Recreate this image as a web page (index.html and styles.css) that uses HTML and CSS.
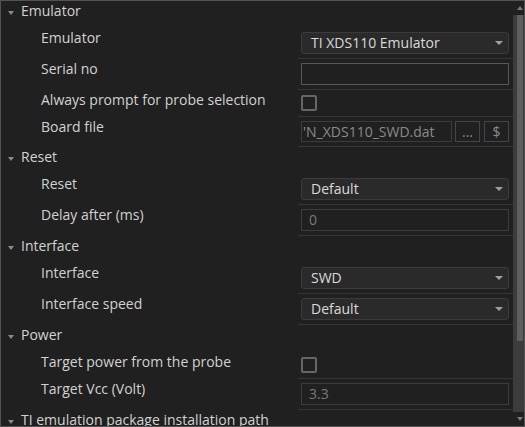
FILE: index.html
```html
<!DOCTYPE html>
<html lang="en">
<head>
    <meta charset="UTF-8">
    <meta name="viewport" content="width=device-width, initial-scale=1.0">
    <title>Debug Properties</title>
    <link rel="stylesheet" href="styles.css">
</head>
<body>

    <div class="panel">
        <div class="grid">
            <!-- Emulator -->
            <div class="section">
                <div class="section-head"><span class="caret"></span>Emulator</div>
                <div class="row">
                    <div class="label">Emulator</div>
                    <div class="value">
                        <div class="select">TI XDS110 Emulator<span class="arrow"></span></div>
                    </div>
                </div>
                <div class="row">
                    <div class="label">Serial no</div>
                    <div class="value"><div class="input"></div></div>
                </div>
                <div class="row">
                    <div class="label">Always prompt for probe selection</div>
                    <div class="value"><span class="checkbox"></span></div>
                </div>
                <div class="row">
                    <div class="label">Board file</div>
                    <div class="value file">
                        <div class="input disabled path">'N_XDS110_SWD.dat</div>
                        <div class="btn">...</div>
                        <div class="btn">$</div>
                    </div>
                </div>
            </div>

            <!-- Reset -->
            <div class="section">
                <div class="section-head"><span class="caret"></span>Reset</div>
                <div class="row">
                    <div class="label">Reset</div>
                    <div class="value">
                        <div class="select">Default<span class="arrow"></span></div>
                    </div>
                </div>
                <div class="row">
                    <div class="label">Delay after (ms)</div>
                    <div class="value"><div class="input disabled">0</div></div>
                </div>
            </div>

            <!-- Interface -->
            <div class="section">
                <div class="section-head"><span class="caret"></span>Interface</div>
                <div class="row">
                    <div class="label">Interface</div>
                    <div class="value">
                        <div class="select">SWD<span class="arrow"></span></div>
                    </div>
                </div>
                <div class="row">
                    <div class="label">Interface speed</div>
                    <div class="value">
                        <div class="select">Default<span class="arrow"></span></div>
                    </div>
                </div>
            </div>

            <!-- Power -->
            <div class="section">
                <div class="section-head"><span class="caret"></span>Power</div>
                <div class="row">
                    <div class="label">Target power from the probe</div>
                    <div class="value"><span class="checkbox"></span></div>
                </div>
                <div class="row">
                    <div class="label">Target Vcc (Volt)</div>
                    <div class="value"><div class="input disabled">3.3</div></div>
                </div>
            </div>

            <div class="section">
                <div class="section-head"><span class="caret"></span>TI emulation package installation path</div>
            </div>
        </div>

        <div class="scrollbar">
            <div class="sb-btn"><span class="sb-up"></span></div>
            <div class="sb-track"><div class="sb-thumb"></div></div>
            <div class="sb-btn"><span class="sb-down"></span></div>
        </div>
    </div>

</body>
</html>
```

FILE: styles.css
```css
body {
    margin: 0;
    background-color: #202020;
    font-family: 'Open Sans', 'Noto Sans', sans-serif;
    font-size: 14px;
    color: #d2d2d2;
}

.panel {
    display: flex;
    height: 427px;
    box-sizing: border-box;
    border: 1px solid #525252;
    background-color: #202020;
    overflow: hidden;
}

.grid {
    flex: 1;
    overflow: hidden;
}

.section-head {
    display: flex;
    align-items: flex-start;
    height: 27px;
    box-sizing: border-box;
    padding: 0 0 0 7px;
    line-height: 19px;
    white-space: nowrap;
}

.caret {
    width: 0;
    height: 0;
    margin: 10px 7px 0 0;
    border-left: 3px solid transparent;
    border-right: 3px solid transparent;
    border-top: 4px solid #8a8a8a;
}

.row {
    display: flex;
}

.label {
    width: 297px;
    box-sizing: border-box;
    padding: 0 0 0 40px;
    line-height: 19px;
    white-space: nowrap;
}

.value {
    flex: 1;
    display: flex;
    align-items: center;
    min-height: 18px;
    padding: 4px 4px 4px 3px;
    border-bottom: 1px solid #363636;
}

.select {
    position: relative;
    flex: 1;
    height: 22px;
    box-sizing: border-box;
    padding-left: 9px;
    line-height: 20px;
    background-color: #2a2a2a;
    border: 1px solid #3b3b3b;
    border-radius: 3px;
    color: #dadada;
}

.select .arrow {
    position: absolute;
    right: 5px;
    top: 8px;
    border-left: 4px solid transparent;
    border-right: 4px solid transparent;
    border-top: 4px solid #a0a0a0;
}

.input {
    flex: 1;
    height: 22px;
    box-sizing: border-box;
    padding-left: 7px;
    line-height: 20px;
    border: 1px solid #575757;
    color: #d2d2d2;
}

.input.disabled {
    border-color: #3c3c3c;
    color: #7a7a7a;
}

.file {
    gap: 3px;
}

.input.path {
    height: 21px;
    line-height: 19px;
    padding-left: 1px;
    overflow: hidden;
    white-space: nowrap;
    color: #8a8a8a;
}

.btn {
    width: 25px;
    height: 21px;
    box-sizing: border-box;
    border: 1px solid #454545;
    text-align: center;
    line-height: 19px;
    color: #8a8a8a;
}

.btn + .btn {
    margin-left: 1px;
}

.checkbox {
    width: 16px;
    height: 16px;
    box-sizing: border-box;
    border: 2px solid #666;
    border-radius: 2px;
}

/* fake scrollbar */
.scrollbar {
    width: 11px;
    display: flex;
    flex-direction: column;
}

.sb-btn {
    height: 14px;
    display: flex;
    align-items: center;
    justify-content: center;
    padding-left: 2px;
}

.sb-up, .sb-down {
    width: 0;
    height: 0;
    border-left: 3px solid transparent;
    border-right: 3px solid transparent;
}

.sb-up {
    border-bottom: 4px solid #7a7a7a;
}

.sb-down {
    border-top: 4px solid #7a7a7a;
}

.sb-track {
    flex: 1;
    background-color: #3c3c3c;
}

.sb-thumb {
    height: 326px;
    margin-left: 4px;
    width: 6px;
    background-color: #5e5e5e;
}
```
